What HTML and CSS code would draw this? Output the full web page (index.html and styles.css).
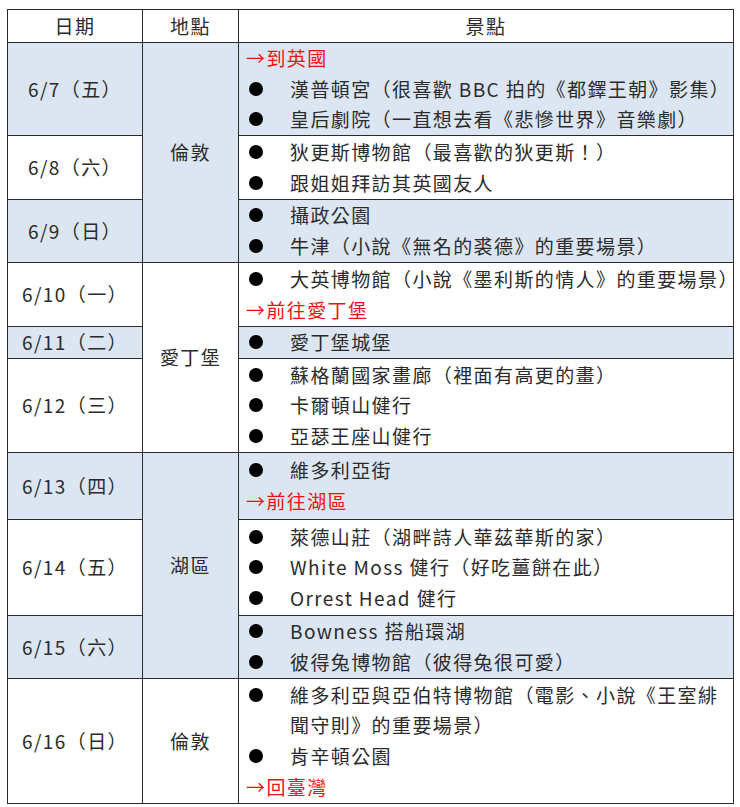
FILE: index.html
```html
<!DOCTYPE html>
<html lang="zh-Hant">
<head>
<meta charset="utf-8">
<title>英國行程</title>
<link rel="stylesheet" href="styles.css">
</head>
<body>
<div class="wrap">
<table class="plan">
  <colgroup><col class="c-date"><col class="c-place"><col class="c-spot"></colgroup>
  <thead>
    <tr class="h-head"><th>日期</th><th>地點</th><th>景點</th></tr>
  </thead>
  <tbody>
    <tr class="h3 blue">
      <td class="date">6/7（五）</td>
      <td class="place blue" rowspan="3">倫敦</td>
      <td class="spot">
        <div class="go">→到英國</div>
        <div class="item">漢普頓宮（很喜歡 BBC 拍的《都鐸王朝》影集）</div>
        <div class="item">皇后劇院（一直想去看《悲慘世界》音樂劇）</div>
      </td>
    </tr>
    <tr class="h2">
      <td class="date">6/8（六）</td>
      <td class="spot">
        <div class="item">狄更斯博物館（最喜歡的狄更斯！）</div>
        <div class="item">跟姐姐拜訪其英國友人</div>
      </td>
    </tr>
    <tr class="h2b blue">
      <td class="date">6/9（日）</td>
      <td class="spot">
        <div class="item">攝政公園</div>
        <div class="item">牛津（小說《無名的裘德》的重要場景）</div>
      </td>
    </tr>
    <tr class="h2">
      <td class="date">6/10（一）</td>
      <td class="place" rowspan="3">愛丁堡</td>
      <td class="spot">
        <div class="item">大英博物館（小說《墨利斯的情人》的重要場景）</div>
        <div class="go">→前往愛丁堡</div>
      </td>
    </tr>
    <tr class="h1 blue">
      <td class="date">6/11（二）</td>
      <td class="spot">
        <div class="item">愛丁堡城堡</div>
      </td>
    </tr>
    <tr class="h3b">
      <td class="date">6/12（三）</td>
      <td class="spot">
        <div class="item">蘇格蘭國家畫廊（裡面有高更的畫）</div>
        <div class="item">卡爾頓山健行</div>
        <div class="item">亞瑟王座山健行</div>
      </td>
    </tr>
    <tr class="h2t blue">
      <td class="date">6/13（四）</td>
      <td class="place blue" rowspan="3">湖區</td>
      <td class="spot">
        <div class="item">維多利亞街</div>
        <div class="go">→前往湖區</div>
      </td>
    </tr>
    <tr class="h3c">
      <td class="date">6/14（五）</td>
      <td class="spot">
        <div class="item">萊德山莊（湖畔詩人華茲華斯的家）</div>
        <div class="item">White Moss 健行（好吃薑餅在此）</div>
        <div class="item">Orrest Head 健行</div>
      </td>
    </tr>
    <tr class="h2b blue">
      <td class="date">6/15（六）</td>
      <td class="spot">
        <div class="item">Bowness 搭船環湖</div>
        <div class="item">彼得兔博物館（彼得兔很可愛）</div>
      </td>
    </tr>
    <tr class="h4">
      <td class="date">6/16（日）</td>
      <td class="place">倫敦</td>
      <td class="spot">
        <div class="item">維多利亞與亞伯特博物館（電影、小說《王室緋<br>聞守則》的重要場景）</div>
        <div class="item">肯辛頓公園</div>
        <div class="go">→回臺灣</div>
      </td>
    </tr>
  </tbody>
</table>
</div>
</body>
</html>
```
FILE: styles.css
```css
html, body {
  margin: 0;
  padding: 0;
  background: #ffffff;
}
.wrap {
  padding: 9px 0 0 7px;
}
.plan {
  border-collapse: collapse;
  table-layout: fixed;
  width: 726px;
  font-family: "Noto Sans CJK TC", "Noto Sans", sans-serif;
  font-size: 19px;
  letter-spacing: 1.4px;
  color: #2b2b2b;
}
.c-date { width: 135px; }
.c-place { width: 96px; }
.c-spot { width: 495px; }
.plan th, .plan td {
  border: 1px solid #2a2a2a;
  padding: 0;
  vertical-align: middle;
  line-height: 30.6px;
}
.plan th {
  font-weight: normal;
  text-align: center;
}
.h-head { height: 33px; }
.h1 { height: 32px; }
.h2 { height: 64px; }
.h2b { height: 63px; }
.h2t { height: 67px; }
.h3 { height: 93px; }
.h3b { height: 94px; }
.h3c { height: 96px; }
.h4 { height: 125px; }
.blue td { background: #dce6f2; }
.plan td.place { background: #ffffff; }
.plan td.place.blue { background: #dce6f2; }
.date, .place {
  text-align: center;
}
.spot {
  padding: 0 4px 0 7px !important;
}
.go {
  color: #ee1111;
  white-space: nowrap;
}
.item {
  position: relative;
  padding-left: 44px;
  white-space: nowrap;
}
.item::before {
  content: "";
  position: absolute;
  left: 3px;
  top: 8px;
  width: 14px;
  height: 14px;
  border-radius: 50%;
  background: #000000;
}
```
